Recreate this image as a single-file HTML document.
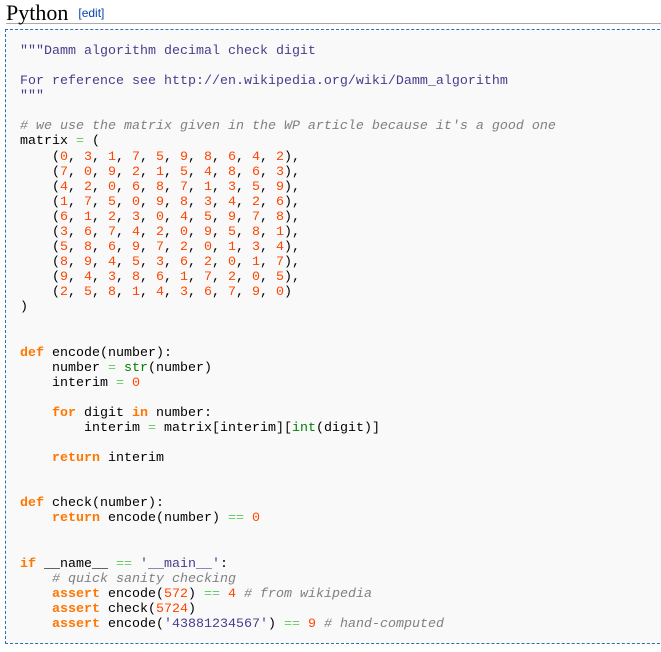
<!DOCTYPE html>
<html><head><meta charset="utf-8"><style>
body{margin:0;background:#fff;width:661px;height:652px;overflow:hidden;position:relative}
h2{position:absolute;left:6px;top:0;margin:0;width:660px;height:23px;border-bottom:1px solid #aaa;font:22px "Liberation Serif",serif;color:#000;line-height:26px;font-weight:normal}
h2 span{font:12px "Liberation Sans",sans-serif;color:#0645ad;margin-left:10px;vertical-align:3px}
pre{position:absolute;left:5px;top:29px;width:670px;height:615px;margin:0;border:1px dashed #2f6fab;background:#f9f9f9;padding:14px 0 0 14px;font:13.33px "Liberation Mono",monospace;line-height:15.08px;color:#000;box-sizing:border-box}
.k{color:#ff7700;font-weight:bold}.n{color:#ff4500}.s{color:#483d8b}.c{color:#808080;font-style:italic}.o{color:#66cc66}.b{color:#008000}
</style></head><body>
<h2>Python<span>[edit]</span></h2>
<pre><span class="s">"""Damm algorithm decimal check digit

For reference see http://en.wikipedia.org/wiki/Damm_algorithm
"""</span>

<span class="c"># we use the matrix given in the WP article because it's a good one</span>
matrix <span class="o">=</span> (
    (<span class="n">0</span>, <span class="n">3</span>, <span class="n">1</span>, <span class="n">7</span>, <span class="n">5</span>, <span class="n">9</span>, <span class="n">8</span>, <span class="n">6</span>, <span class="n">4</span>, <span class="n">2</span>),
    (<span class="n">7</span>, <span class="n">0</span>, <span class="n">9</span>, <span class="n">2</span>, <span class="n">1</span>, <span class="n">5</span>, <span class="n">4</span>, <span class="n">8</span>, <span class="n">6</span>, <span class="n">3</span>),
    (<span class="n">4</span>, <span class="n">2</span>, <span class="n">0</span>, <span class="n">6</span>, <span class="n">8</span>, <span class="n">7</span>, <span class="n">1</span>, <span class="n">3</span>, <span class="n">5</span>, <span class="n">9</span>),
    (<span class="n">1</span>, <span class="n">7</span>, <span class="n">5</span>, <span class="n">0</span>, <span class="n">9</span>, <span class="n">8</span>, <span class="n">3</span>, <span class="n">4</span>, <span class="n">2</span>, <span class="n">6</span>),
    (<span class="n">6</span>, <span class="n">1</span>, <span class="n">2</span>, <span class="n">3</span>, <span class="n">0</span>, <span class="n">4</span>, <span class="n">5</span>, <span class="n">9</span>, <span class="n">7</span>, <span class="n">8</span>),
    (<span class="n">3</span>, <span class="n">6</span>, <span class="n">7</span>, <span class="n">4</span>, <span class="n">2</span>, <span class="n">0</span>, <span class="n">9</span>, <span class="n">5</span>, <span class="n">8</span>, <span class="n">1</span>),
    (<span class="n">5</span>, <span class="n">8</span>, <span class="n">6</span>, <span class="n">9</span>, <span class="n">7</span>, <span class="n">2</span>, <span class="n">0</span>, <span class="n">1</span>, <span class="n">3</span>, <span class="n">4</span>),
    (<span class="n">8</span>, <span class="n">9</span>, <span class="n">4</span>, <span class="n">5</span>, <span class="n">3</span>, <span class="n">6</span>, <span class="n">2</span>, <span class="n">0</span>, <span class="n">1</span>, <span class="n">7</span>),
    (<span class="n">9</span>, <span class="n">4</span>, <span class="n">3</span>, <span class="n">8</span>, <span class="n">6</span>, <span class="n">1</span>, <span class="n">7</span>, <span class="n">2</span>, <span class="n">0</span>, <span class="n">5</span>),
    (<span class="n">2</span>, <span class="n">5</span>, <span class="n">8</span>, <span class="n">1</span>, <span class="n">4</span>, <span class="n">3</span>, <span class="n">6</span>, <span class="n">7</span>, <span class="n">9</span>, <span class="n">0</span>)
)


<span class="k">def</span> encode(number):
    number <span class="o">=</span> <span class="b">str</span>(number)
    interim <span class="o">=</span> <span class="n">0</span>

    <span class="k">for</span> digit <span class="k">in</span> number:
        interim <span class="o">=</span> matrix[interim][<span class="b">int</span>(digit)]

    <span class="k">return</span> interim


<span class="k">def</span> check(number):
    <span class="k">return</span> encode(number) <span class="o">==</span> <span class="n">0</span>


<span class="k">if</span> __name__ <span class="o">==</span> <span class="s">'__main__'</span>:
    <span class="c"># quick sanity checking</span>
    <span class="k">assert</span> encode(<span class="n">572</span>) <span class="o">==</span> <span class="n">4</span> <span class="c"># from wikipedia</span>
    <span class="k">assert</span> check(<span class="n">5724</span>)
    <span class="k">assert</span> encode(<span class="s">'43881234567'</span>) <span class="o">==</span> <span class="n">9</span> <span class="c"># hand-computed</span></pre>
</body></html>
